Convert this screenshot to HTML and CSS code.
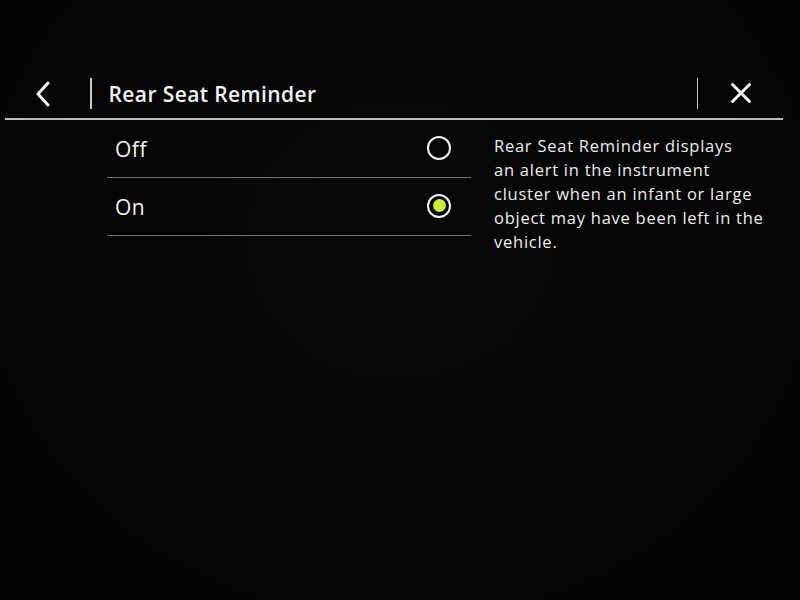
FILE: index.html
```html
<!DOCTYPE html>
<html lang="en">
<head>
<meta charset="utf-8">
<title>Rear Seat Reminder</title>
<link rel="stylesheet" href="styles.css">
</head>
<body>
<div class="screen">
  <header class="topbar">
    <div class="back">
      <svg width="16" height="26" viewBox="0 0 16 26"><path d="M13 2 L3 13 L13 24" fill="none" stroke="#f2f2f2" stroke-width="3" stroke-linecap="round" stroke-linejoin="round"/></svg>
    </div>
    <div class="vdiv"></div>
    <h1 class="title">Rear Seat Reminder</h1>
    <div class="spacer"></div>
    <div class="vdiv"></div>
    <div class="close">
      <svg width="22" height="22" viewBox="0 0 22 22"><path d="M2.5 2.5 L19.5 19.5 M19.5 2.5 L2.5 19.5" fill="none" stroke="#f2f2f2" stroke-width="3" stroke-linecap="round"/></svg>
    </div>
  </header>
  <main class="content">
    <ul class="options">
      <li class="option"><span class="label">Off</span><span class="radio"></span></li>
      <li class="option"><span class="label">On</span><span class="radio checked"></span></li>
    </ul>
    <p class="desc">Rear Seat Reminder displays<br>an alert in the instrument<br>cluster when an infant or large<br>object may have been left in the<br>vehicle.</p>
  </main>
</div>
</body>
</html>
```
FILE: styles.css
```css
html, body {
  margin: 0;
  padding: 0;
  background: #030303;
  height: 100%;
}
.screen {
  width: 800px;
  height: 600px;
  padding-top: 68px;
  box-sizing: border-box;
  font-family: "Open Sans", "Noto Sans", sans-serif;
  color: #f2f2f2;
  background: radial-gradient(ellipse at 50% 40%, #070707 0%, #040404 70%, #020202 100%);
}
.topbar {
  display: flex;
  align-items: center;
  height: 50px;
  margin: 0 17px 0 5px;
  border-bottom: 2px solid #bdbdbd;
}
.back {
  width: 85px;
  display: flex;
  justify-content: flex-start;
  padding-left: 30px;
  box-sizing: border-box;
  margin-top: 2px;
}
.back svg { display: block; }
.vdiv {
  width: 1.5px;
  height: 31px;
  background: #c8c8c8;
}
.title {
  margin: 2px 0 0 17px;
  font-size: 21px;
  font-weight: 600;
  letter-spacing: 0.4px;
  line-height: 28px;
}
.spacer { flex: 1; }
.close {
  width: 85px;
  display: flex;
  padding-left: 32px;
  box-sizing: border-box;
}
.close svg { display: block; }
.content {
  display: flex;
  align-items: flex-start;
}
.options {
  list-style: none;
  margin: 0 0 0 107px;
  padding: 0;
  width: 364px;
}
.option {
  display: flex;
  align-items: center;
  justify-content: space-between;
  height: 57px;
  border-bottom: 1.5px solid #6e6e6e;
  padding: 0 20px 0 8px;
}
.label {
  font-size: 21px;
  line-height: 28px;
  letter-spacing: 0.5px;
  font-weight: 500;
}
.radio {
  width: 20px;
  height: 20px;
  border: 2px solid #f2f2f2;
  border-radius: 50%;
  display: flex;
  align-items: center;
  justify-content: center;
  margin-top: -2px;
}
.radio.checked::after {
  content: "";
  width: 13px;
  height: 13px;
  border-radius: 50%;
  background: #c8f03a;
}
.desc {
  margin: 14px 0 0 23px;
  font-size: 16.5px;
  font-weight: 500;
  line-height: 24px;
  letter-spacing: 0.75px;
  white-space: nowrap;
  color: #ededed;
}
```
